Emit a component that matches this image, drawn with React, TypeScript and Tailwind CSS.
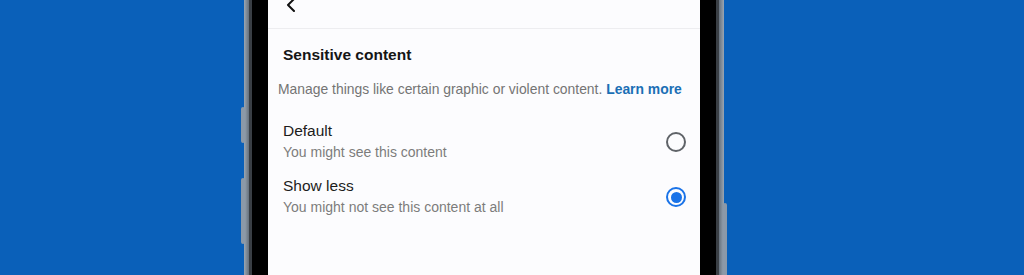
const options = [
    {
        id: "default",
        title: "Default",
        sub: "You might see this content",
        checked: false,
    },
    {
        id: "less",
        title: "Show less",
        sub: "You might not see this content at all",
        checked: true,
    },
];

const Radio = ({ checked }: { checked: boolean }) => {
    if (checked) {
        return (
            <div className="flex h-[20px] w-[20px] items-center justify-center rounded-full border-[2px] border-[#1a73e8]">
                <div className="h-[11px] w-[11px] rounded-full bg-[#1a73e8]" />
            </div>
        );
    }
    return <div className="h-[20px] w-[20px] rounded-full border-[2px] border-[#5f6368]" />;
};

export default function App() {
    return (
        <div
            className="flex h-[275px] w-full overflow-hidden bg-[#0a60b9] pl-[244px]"
            style={{ fontFamily: "'Liberation Sans', Arial, sans-serif" }}
        >
            {/* phone frame */}
            <div className="relative flex h-full">
                {/* side buttons */}
                <div className="absolute left-[-3px] top-[107px] h-[36px] w-[4px] rounded-sm bg-[#8c99a8]" />
                <div className="absolute left-[-3px] top-[178px] h-[66px] w-[4px] rounded-sm bg-[#8c99a8]" />
                <div className="absolute right-[-3px] top-[203px] h-[80px] w-[4px] rounded-sm bg-[#8c99a8]" />

                <div className="w-[5px] bg-gradient-to-r from-[#9aa6b3] to-[#66717d]" />
                <div className="w-[3px] bg-[#3a3f45]" />
                <div className="w-[16px] bg-black" />

                {/* screen */}
                <div className="flex w-[432px] flex-col bg-[#fcfcfe]">
                    <div className="flex h-[29px] items-start border-b border-[#ededf0] pl-[17px]">
                        <svg width="12" height="14" viewBox="0 0 12 14" className="-mt-[2px]">
                            <path
                                d="M9 1 L3 7 L9 13"
                                fill="none"
                                stroke="#111"
                                strokeWidth="2"
                                strokeLinecap="round"
                                strokeLinejoin="round"
                            />
                        </svg>
                    </div>

                    <div className="pl-[15px] pt-[16px] text-[15.5px] font-bold leading-[20px] text-[#151515]">
                        Sensitive content
                    </div>

                    <div className="pl-[10px] pt-[15px] text-[13.9px] leading-[18px] text-[#747474]">
                        Manage things like certain graphic or violent content.{" "}
                        <span className="font-bold text-[#1b6fb5]">Learn more</span>
                    </div>

                    <div className="flex flex-col gap-[13px] pt-[23px]">
                        {options.map((o) => (
                            <div key={o.id} className="flex items-center justify-between pl-[15px] pr-[14px]">
                                <div className="flex flex-col">
                                    <div className="text-[15.5px] leading-[20px] text-[#1c1c1c]">{o.title}</div>
                                    <div className="text-[14px] leading-[22px] text-[#7c7c7c]">{o.sub}</div>
                                </div>
                                <Radio checked={o.checked} />
                            </div>
                        ))}
                    </div>
                </div>

                <div className="w-[16px] bg-black" />
                <div className="w-[3px] bg-[#3a3f45]" />
                <div className="w-[5px] bg-gradient-to-r from-[#66717d] to-[#9aa6b3]" />
            </div>
        </div>
    );
}
